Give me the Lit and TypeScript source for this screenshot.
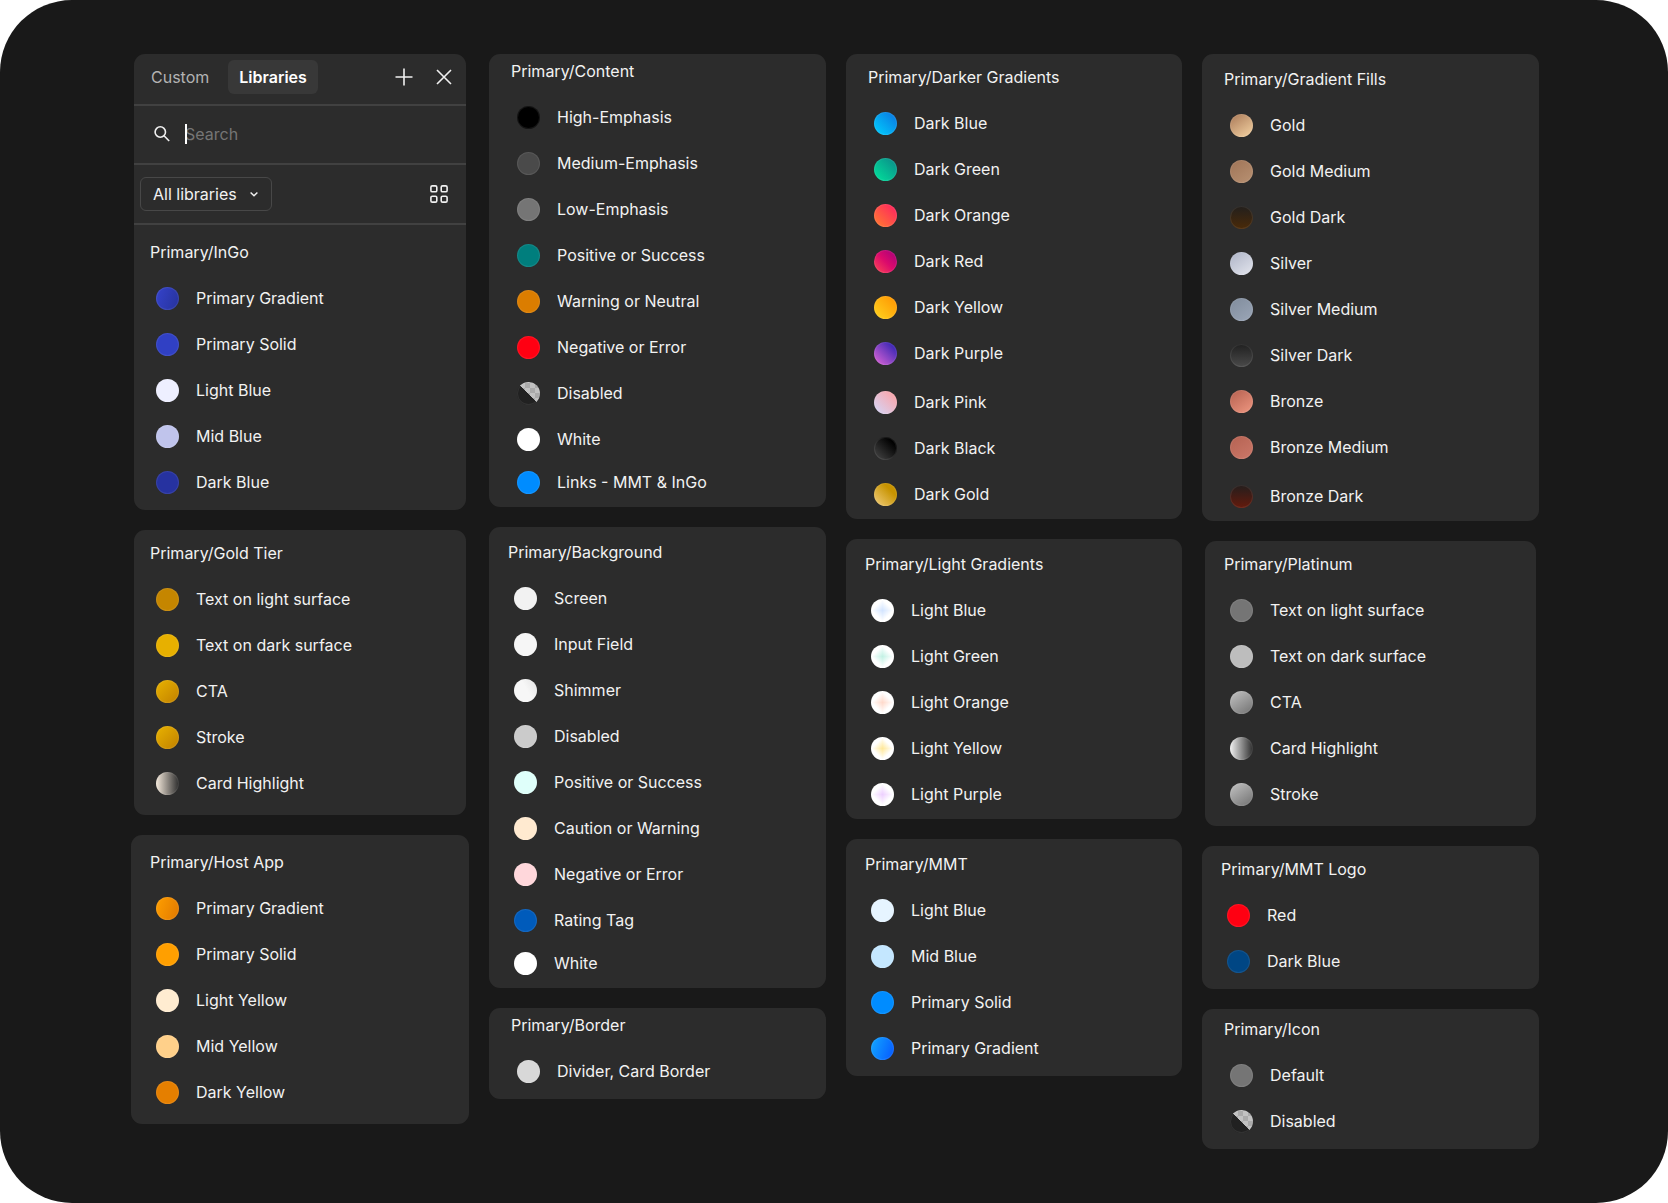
import { LitElement, html, css, svg } from "lit";
import { customElement, property, state } from "lit/decorators.js";
import { styleMap } from "lit/directives/style-map.js";

interface Swatch {
  name: string;
  fill: string;
}

type Inset = "narrow" | "snug" | "wide";
type Top = "top-xs" | "top-sm" | "top-md" | "top-lg" | "top-xl";
type Bottom = "bottom-sm" | "bottom-md" | "bottom-lg";

interface Group {
  title: string;
  inset: Inset;
  top: Top;
  bottom: Bottom;
  slim?: boolean;
  items: Swatch[];
  /** Trailing item kept apart from the main run of swatches. */
  extra?: { spacing: "close" | "apart"; items: Swatch[] };
}

const s = (name: string, fill: string): Swatch => ({ name, fill });

const linear = (angle: number, from: string, to: string) =>
  `linear-gradient(${angle}deg, ${from}, ${to})`;

/** Four mirrored corner gradients; they overlap by a pixel so no seam shows. */
const diamond = (color: string) =>
  ["bottom right", "bottom left", "top left", "top right"]
    .map(
      (corner) =>
        `linear-gradient(to ${corner}, ${color} 0%, #ffffff 50%) ${corner} / 12px 12px no-repeat`
    )
    .join(", ");

const translucent =
  "linear-gradient(45deg, #212121 50%, transparent 50%), " +
  "repeating-conic-gradient(#aaaaaa 0% 25%, #c2c2c2 0% 50%) 3px 1px / 10px 10px";

const inGo: Group = {
  title: "Primary/InGo",
  inset: "narrow",
  top: "top-xl",
  bottom: "bottom-md",
  items: [
    s("Primary Gradient", linear(110, "#3543cc", "#26329a")),
    s("Primary Solid", "#3040c4"),
    s("Light Blue", "#eeefff"),
    s("Mid Blue", "#c0c4ec"),
    s("Dark Blue", "#2632a0"),
  ],
};

const columns: Group[][] = [
  [
    {
      title: "Primary/Gold Tier",
      inset: "narrow",
      top: "top-md",
      bottom: "bottom-lg",
      slim: true,
      items: [
        s("Text on light surface", "#c58600"),
        s("Text on dark surface", "#e7b000"),
        s("CTA", linear(135, "#e9b300", "#c08000")),
        s("Stroke", linear(135, "#e9b300", "#c08000")),
        s("Card Highlight", linear(90, "#f5eadc", "#2c2c2c")),
      ],
    },
    {
      title: "Primary/Host App",
      inset: "snug",
      top: "top-xl",
      bottom: "bottom-lg",
      items: [
        s("Primary Gradient", linear(110, "#ff9f00", "#e07800")),
        s("Primary Solid", "#ff9f00"),
        s("Light Yellow", "#ffecd1"),
        s("Mid Yellow", "#ffd08a"),
        s("Dark Yellow", "#e57f00"),
      ],
    },
  ],
  [
    {
      title: "Primary/Content",
      inset: "wide",
      top: "top-xs",
      bottom: "bottom-sm",
      items: [
        s("High-Emphasis", "#000000"),
        s("Medium-Emphasis", "#4a4a4a"),
        s("Low-Emphasis", "#757575"),
        s("Positive or Success", "#007e7d"),
        s("Warning or Neutral", "#db7d00"),
        s("Negative or Error", "#ff0012"),
        s("Disabled", translucent),
        s("White", "#ffffff"),
      ],
      extra: { spacing: "close", items: [s("Links - MMT & InGo", "#008cff")] },
    },
    {
      title: "Primary/Background",
      inset: "snug",
      top: "top-lg",
      bottom: "bottom-sm",
      items: [
        s("Screen", "#f2f2f2"),
        s("Input Field", "#f6f6f6"),
        s("Shimmer", "linear-gradient(60deg, #f7f7f7 55%, #e2e2e2)"),
        s("Disabled", "#cbcbcb"),
        s("Positive or Success", "#dffffa"),
        s("Caution or Warning", "#ffead0"),
        s("Negative or Error", "#ffd7db"),
        s("Rating Tag", "#005bbb"),
      ],
      extra: { spacing: "close", items: [s("White", "#ffffff")] },
    },
    {
      title: "Primary/Border",
      inset: "wide",
      top: "top-xs",
      bottom: "bottom-md",
      items: [s("Divider, Card Border", "#d8d8d8")],
    },
  ],
  [
    {
      title: "Primary/Darker Gradients",
      inset: "wide",
      top: "top-md",
      bottom: "bottom-sm",
      items: [
        s("Dark Blue", linear(45, "#00d2ff", "#0b72e0")),
        s("Dark Green", linear(45, "#00e59c", "#0c8788")),
        s("Dark Orange", linear(45, "#ff7f2e", "#ff1d63")),
        s("Dark Red", "linear-gradient(45deg, #ff4a52, #db0a6c 50%, #a1007c)"),
        s("Dark Yellow", linear(45, "#ffd620", "#ff9100")),
        s("Dark Purple", linear(45, "#e568d8", "#1f1cae")),
      ],
      extra: {
        spacing: "apart",
        items: [
          s("Dark Pink", linear(45, "#d2d8fb", "#ff9fa0")),
          s("Dark Black", "linear-gradient(45deg, #4a4a4a, #000000 80%)"),
          s("Dark Gold", "linear-gradient(45deg, #f2cf80, #c79300 70%)"),
        ],
      },
    },
    {
      title: "Primary/Light Gradients",
      inset: "snug",
      top: "top-lg",
      bottom: "bottom-sm",
      items: [
        s("Light Blue", diamond("#cfe2ff")),
        s("Light Green", diamond("#bdf0e2")),
        s("Light Orange", diamond("#ffd6c6")),
        s("Light Yellow", diamond("#ffe690")),
        s("Light Purple", diamond("#ecccff")),
      ],
    },
    {
      title: "Primary/MMT",
      inset: "snug",
      top: "top-lg",
      bottom: "bottom-md",
      items: [
        s("Light Blue", "#e6f4ff"),
        s("Mid Blue", "#c4e7ff"),
        s("Primary Solid", "#008cff"),
        s("Primary Gradient", linear(110, "#12a8ff", "#0657ff")),
      ],
    },
  ],
  [
    {
      title: "Primary/Gradient Fills",
      inset: "wide",
      top: "top-lg",
      bottom: "bottom-sm",
      items: [
        s("Gold", linear(145, "#a97857", "#f5d4a4")),
        s("Gold Medium", linear(145, "#9f7457", "#b89172")),
        s("Gold Dark", linear(180, "#221f1d", "#4a2a08")),
        s("Silver", linear(145, "#adb3c6", "#e4e6ee")),
        s("Silver Medium", linear(145, "#808c9c", "#9ba6b7")),
        s("Silver Dark", linear(180, "#202020", "#4a4a4a")),
        s("Bronze", linear(145, "#b4604f", "#ef9781")),
        s("Bronze Medium", linear(145, "#b56252", "#cb7869")),
      ],
      extra: {
        spacing: "apart",
        items: [s("Bronze Dark", linear(180, "#241e1d", "#641a0c"))],
      },
    },
    {
      title: "Primary/Platinum",
      inset: "snug",
      top: "top-md",
      bottom: "bottom-lg",
      slim: true,
      items: [
        s("Text on light surface", "#757575"),
        s("Text on dark surface", "#bdbdbd"),
        s("CTA", linear(145, "#c4c4c4", "#707070")),
        s("Card Highlight", linear(90, "#f2f2f2", "#2c2c2c")),
        s("Stroke", linear(145, "#c4c4c4", "#707070")),
      ],
    },
    {
      title: "Primary/MMT Logo",
      inset: "snug",
      top: "top-md",
      bottom: "bottom-md",
      items: [s("Red", "#ff0012"), s("Dark Blue", "#004684")],
    },
    {
      title: "Primary/Icon",
      inset: "wide",
      top: "top-sm",
      bottom: "bottom-md",
      items: [s("Default", "#757575"), s("Disabled", translucent)],
    },
  ],
];

@customElement("swatch-group")
class SwatchGroup extends LitElement {
  @property({ attribute: false }) group!: Group;

  static styles = css`
    :host {
      display: block;
    }
    .group {
      display: flex;
      flex-direction: column;
      gap: 22px;
    }
    .narrow { padding-left: 16px; }
    .snug { padding-left: 19px; }
    .wide { padding-left: 22px; }
    .top-xs { padding-top: 5px; }
    .top-sm { padding-top: 8px; }
    .top-md { padding-top: 11px; }
    .top-lg { padding-top: 13px; }
    .top-xl { padding-top: 15px; }
    .bottom-sm { padding-bottom: 13px; }
    .bottom-md { padding-bottom: 16px; }
    .bottom-lg { padding-bottom: 20px; }
    .title {
      margin: 0;
      font-size: 16px;
      font-weight: 400;
      line-height: 24px;
    }
    .list {
      list-style: none;
      margin: 0;
      padding: 0 0 0 6px;
      display: flex;
      flex-direction: column;
      gap: 22px;
    }
    .close { margin-top: -3px; }
    .apart { margin-top: 3px; }
    .item {
      display: flex;
      align-items: center;
      gap: 17px;
      line-height: 24px;
    }
    .dot {
      flex: none;
      width: 23px;
      height: 23px;
      border-radius: 50%;
      box-shadow: inset 0 0 0 1px rgba(255, 255, 255, 0.08);
    }
  `;

  private renderList(items: Swatch[], spacing = "") {
    return html`<ul class="list ${spacing}">
      ${items.map(
        (item) => html`<li class="item">
          <span class="dot" style=${styleMap({ background: item.fill })}></span>
          <span>${item.name}</span>
        </li>`
      )}
    </ul>`;
  }

  render() {
    const g = this.group;
    return html`<section class="group ${g.inset} ${g.top} ${g.bottom}">
      <h2 class="title">${g.title}</h2>
      ${this.renderList(g.items)}
      ${g.extra ? this.renderList(g.extra.items, g.extra.spacing) : null}
    </section>`;
  }
}

const plusIcon = svg`<path d="M12 3.5v17M3.5 12h17" />`;
const closeIcon = svg`<path d="M5 5l14 14M19 5L5 19" />`;

@customElement("library-header")
class LibraryHeader extends LitElement {
  @state() private tab = "Libraries";

  static styles = css`
    :host {
      display: block;
    }
    button,
    select,
    input {
      font: inherit;
      color: inherit;
      background: none;
      border: 0;
      margin: 0;
      padding: 0;
      outline: none;
    }
    .bar {
      box-sizing: border-box;
      display: flex;
      align-items: center;
      border-bottom: 2px solid #414141;
    }
    .tabs {
      height: 52px;
      padding: 0 10px 4px 6px;
      gap: 8px;
    }
    .tab {
      height: 34px;
      padding: 0 11px;
      border-radius: 6px;
      color: #b3b3b3;
    }
    .tab.active {
      background: #383838;
      color: #ffffff;
      font-weight: 600;
    }
    .actions {
      display: flex;
      gap: 16px;
      margin-left: auto;
    }
    .icon {
      display: block;
      width: 24px;
      height: 24px;
      fill: none;
      stroke: #f0f0f0;
      stroke-width: 1.6;
    }
    .search {
      height: 59px;
      padding: 0 16px 2px;
      gap: 11px;
    }
    .field {
      position: relative;
      flex: 1;
      display: flex;
    }
    .caret {
      position: absolute;
      left: 0;
      top: 2px;
      width: 2px;
      height: 20px;
      background: #ffffff;
    }
    .input {
      flex: 1;
      min-width: 0;
      line-height: 24px;
    }
    .input::placeholder {
      color: #757575;
      opacity: 1;
    }
    .filter {
      height: 60px;
      padding: 0 15px 0 6px;
      justify-content: space-between;
    }
    .picker {
      display: grid;
      align-items: center;
    }
    .select {
      grid-area: 1 / 1;
      appearance: none;
      box-sizing: border-box;
      height: 34px;
      width: 132px;
      padding: 0 12px;
      border: 1px solid #484848;
      border-radius: 6px;
    }
    .chevron {
      grid-area: 1 / 1;
      justify-self: end;
      width: 12px;
      height: 12px;
      margin-right: 12px;
      fill: none;
      stroke: #f0f0f0;
      stroke-width: 1.5;
      pointer-events: none;
    }
  `;

  private renderTab(name: string) {
    return html`<button
      class="tab ${this.tab === name ? "active" : ""}"
      @click=${() => (this.tab = name)}
    >${name}</button>`;
  }

  render() {
    return html`
      <div class="bar tabs">
        ${this.renderTab("Custom")}${this.renderTab("Libraries")}
        <div class="actions">
          <button aria-label="Add">
            <svg class="icon" viewBox="0 0 24 24">${plusIcon}</svg>
          </button>
          <button aria-label="Close">
            <svg class="icon" viewBox="0 0 24 24">${closeIcon}</svg>
          </button>
        </div>
      </div>
      <div class="bar search">
        <svg class="icon" viewBox="0 0 24 24">
          <circle cx="10.3" cy="10" r="5.2" />
          <path d="M14 13.8l5.2 5.2" />
        </svg>
        <div class="field">
          <input class="input" type="text" aria-label="Search" placeholder="Search" />
          <span class="caret"></span>
        </div>
      </div>
      <div class="bar filter">
        <div class="picker">
          <select class="select" aria-label="Library">
            <option>All libraries</option>
          </select>
          <svg class="chevron" viewBox="0 0 12 12"><path d="M2.6 4.5L6 7.7l3.4-3.2" /></svg>
        </div>
        <button aria-label="Grid view">
          <svg class="icon" viewBox="0 0 24 24">
            <rect x="3.9" y="3.9" width="5.9" height="5.9" rx="1.4" />
            <rect x="14.2" y="3.9" width="5.9" height="5.9" rx="1.4" />
            <rect x="3.9" y="14.2" width="5.9" height="5.9" rx="1.4" />
            <rect x="14.2" y="14.2" width="5.9" height="5.9" rx="1.4" />
          </svg>
        </button>
      </div>
    `;
  }
}

@customElement("app-root")
class AppRoot extends LitElement {
  static styles = css`
    :host {
      display: block;
      background: #ffffff;
      color: #f2f2f2;
      font-family: Inter, "Liberation Sans", sans-serif;
      font-size: 16px;
      line-height: 24px;
    }
    .board {
      box-sizing: border-box;
      min-height: 100vh;
      padding: 54px 129px 53px 131px;
      border-radius: 72px;
      background: #191919;
      display: grid;
      grid-template-columns: 338fr 337fr 336fr 337fr;
      gap: 20px;
      align-items: start;
    }
    .column {
      display: flex;
      flex-direction: column;
      gap: 20px;
      min-width: 0;
    }
    .card {
      border-radius: 11px;
      background: #2c2c2c;
    }
    .slim {
      margin: 0 3px;
    }
  `;

  render() {
    return html`<main class="board">
      ${columns.map(
        (groups, i) => html`<div class="column">
          ${i === 0
            ? html`<div class="card slim">
                <library-header></library-header>
                <swatch-group .group=${inGo}></swatch-group>
              </div>`
            : null}
          ${groups.map(
            (g) => html`<div class="card ${g.slim ? "slim" : ""}">
              <swatch-group .group=${g}></swatch-group>
            </div>`
          )}
        </div>`
      )}
    </main>`;
  }
}
